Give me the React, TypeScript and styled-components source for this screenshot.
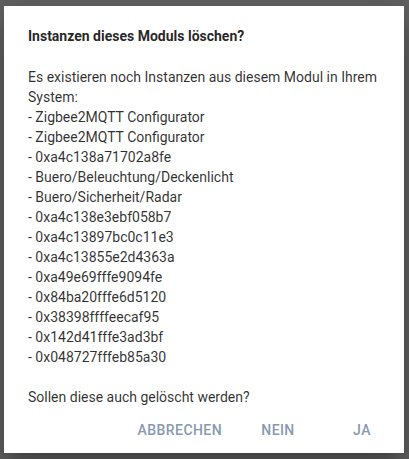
import React from 'react';
import styled, { createGlobalStyle } from 'styled-components';

const GlobalStyle = createGlobalStyle`
  html, body {
    margin: 0;
    padding: 0;
    background: #626262;
  }
  body {
    font-family: Roboto, "Liberation Sans", Arial, sans-serif;
  }
`;

const Backdrop = styled.div`
  width: 409px;
  height: 459px;
  box-sizing: border-box;
  padding: 6px 5px 6px 4px;
  background: #626262;
  overflow: hidden;
`;

const Dialog = styled.div`
  width: 400px;
  height: 447px;
  box-sizing: border-box;
  background: #ffffff;
  box-shadow: 0px 11px 15px -7px rgba(0, 0, 0, 0.2),
    0px 24px 38px 3px rgba(0, 0, 0, 0.14),
    0px 9px 46px 8px rgba(0, 0, 0, 0.12);
  display: flex;
  flex-direction: column;
`;

const Title = styled.h2`
  margin: 0;
  padding: 20px 24px 0;
  font-size: 14px;
  line-height: 20px;
  font-weight: 700;
  color: rgba(0, 0, 0, 0.87);
`;

const Content = styled.div`
  padding: 21px 24px 0;
  font-size: 14px;
  line-height: 20px;
  color: rgba(0, 0, 0, 0.82);
`;

const Paragraph = styled.p`
  margin: 0;
`;

const Question = styled.p`
  margin: 20px 0 0;
`;

const Actions = styled.div`
  display: flex;
  justify-content: flex-end;
  align-items: center;
  gap: 16px;
  padding: 5px 10px 8px 0;
`;

const ActionButton = styled.button<{ $spaced?: boolean }>`
  min-width: 64px;
  margin-left: ${(p) => (p.$spaced ? '4px' : '0')};
  padding: 6px 8px;
  border: 0;
  background: transparent;
  font-family: Roboto, "Liberation Sans", Arial, sans-serif;
  font-size: 14px;
  font-weight: 500;
  line-height: 24.5px;
  letter-spacing: 0.03em;
  text-transform: uppercase;
  color: #8799b0;
  cursor: pointer;
  border-radius: 4px;
`;

const instances = [
  'Zigbee2MQTT Configurator',
  'Zigbee2MQTT Configurator',
  '0xa4c138a71702a8fe',
  'Buero/Beleuchtung/Deckenlicht',
  'Buero/Sicherheit/Radar',
  '0xa4c138e3ebf058b7',
  '0xa4c13897bc0c11e3',
  '0xa4c13855e2d4363a',
  '0xa49e69fffe9094fe',
  '0x84ba20fffe6d5120',
  '0x38398ffffeecaf95',
  '0x142d41fffe3ad3bf',
  '0x048727fffeb85a30',
];

const App: React.FC = () => {
  return (
    <>
      <GlobalStyle />
      <Backdrop>
        <Dialog>
          <Title>Instanzen dieses Moduls löschen?</Title>
          <Content>
            <Paragraph>
              Es existieren noch Instanzen aus diesem Modul in Ihrem System:
              {instances.map((name, i) => (
                <React.Fragment key={i}>
                  <br />- {name}
                </React.Fragment>
              ))}
            </Paragraph>
            <Question>Sollen diese auch gelöscht werden?</Question>
          </Content>
          <Actions>
            <ActionButton>Abbrechen</ActionButton>
            <ActionButton>Nein</ActionButton>
            <ActionButton $spaced>Ja</ActionButton>
          </Actions>
        </Dialog>
      </Backdrop>
    </>
  );
};

export default App;
